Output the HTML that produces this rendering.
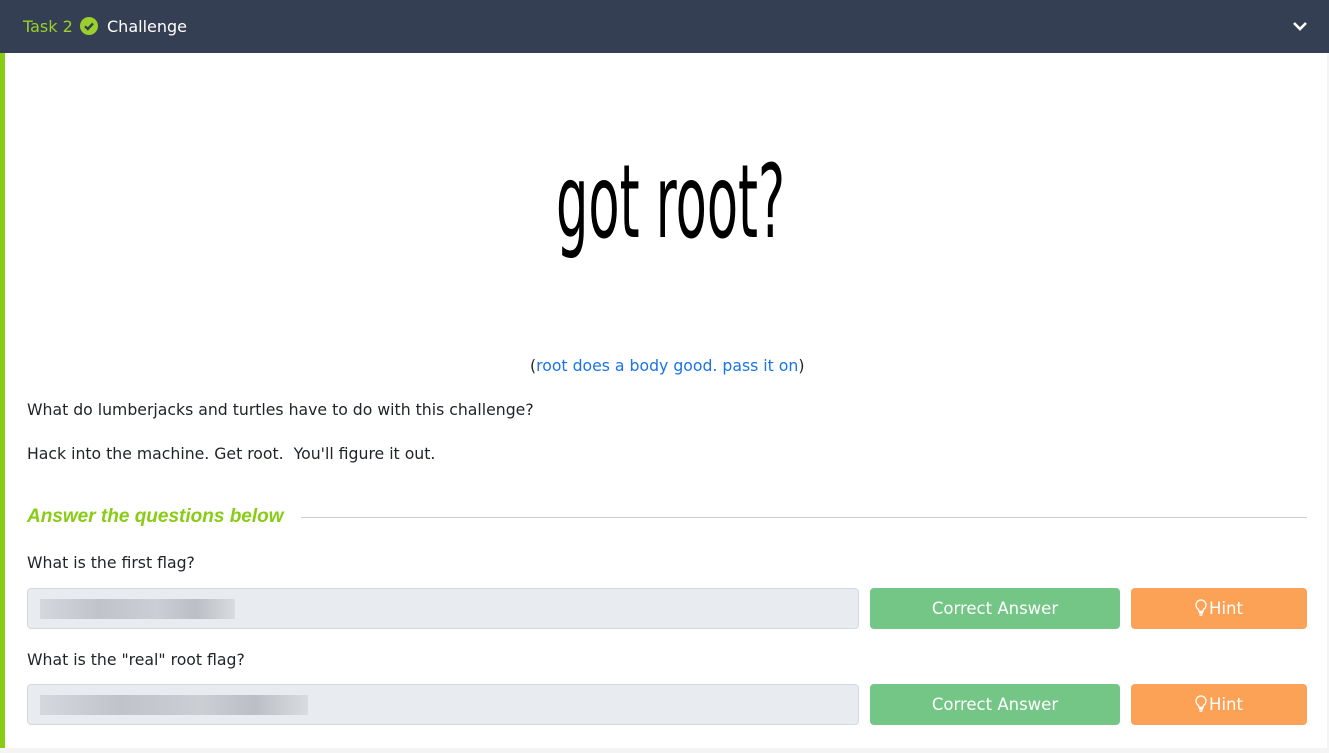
<!DOCTYPE html>
<html><head><meta charset="utf-8"><style>
*{margin:0;padding:0;box-sizing:border-box}
body{width:1329px;height:753px;background:#f4f4f4;font-family:"DejaVu Sans","Liberation Sans",sans-serif;color:#212529;overflow:hidden;position:relative}
.hdr{position:absolute;left:0;top:0;width:1329px;height:53px;background:#353f54;}
.hdr .t{position:absolute;left:23px;top:17px;font-size:16px;color:#9ad02b}
.hdr .c{position:absolute;left:107px;top:17px;font-size:16px;color:#fff}
.card{position:absolute;left:0;top:53px;width:1327px;height:695px;background:#fff;border-left:5px solid #88cc14}
.logo{position:absolute;left:556px;top:152px;font-size:102px;line-height:102px;transform:scaleX(0.50);transform-origin:0 0;color:#000;white-space:nowrap;font-family:"DejaVu Sans","Liberation Sans",sans-serif}
.p{position:absolute;font-size:15.7px;white-space:nowrap}
a{color:#1a73e8;text-decoration:none}
.ans{position:absolute;left:27px;top:506px;font-size:19px;font-style:italic;font-weight:bold;color:#88cc14;font-family:"Liberation Sans",sans-serif}
.line{position:absolute;left:301px;top:517px;width:1006px;height:1px;background:#ccc}
.in{position:absolute;left:27px;width:832px;height:41px;background:#e8ebef;border:1px solid #d5d9de;border-radius:4px}
.blur{position:absolute;left:12px;top:10px;height:20px;background:linear-gradient(90deg,#d0d3d8,#b6bac1 30%,#c4c7cc 60%,#b0b4ba 80%,#d5d8dc);opacity:.8}
.btn{position:absolute;height:41px;border-radius:4px;color:#fff;font-size:16.5px;text-align:center;line-height:41px}
.g{left:870px;width:250px;background:#74c686}
.o{left:1131px;width:176px;background:#fca256}
.btn svg{vertical-align:-3px;margin-right:2px}
</style></head><body>
<div class="hdr"><span class="t">Task 2</span>
<svg style="position:absolute;left:80px;top:17px" width="18" height="18" viewBox="0 0 18 18"><circle cx="9" cy="9" r="9" fill="#9ad02b"/><path d="M5 9.3l2.8 2.7L13 6.5" stroke="#353f54" stroke-width="2.4" fill="none"/></svg>
<span class="c">Challenge</span>
<svg style="position:absolute;left:1292px;top:20px" width="16" height="12" viewBox="0 0 16 12"><path d="M2 3l6 6 6-6" stroke="#fff" stroke-width="2.6" fill="none"/></svg>
</div>
<div class="card"></div>
<div class="logo">got root?</div>
<div class="p" style="left:530px;top:356px">(<a>root does a body good. pass it on</a>)</div>
<div class="p" style="left:27px;top:400px">What do lumberjacks and turtles have to do with this challenge?</div>
<div class="p" style="left:27px;top:444px">Hack into the machine. Get root.&nbsp; You'll figure it out.</div>
<div class="ans">Answer the questions below</div><div class="line"></div>
<div class="p" style="left:27px;top:553px">What is the first flag?</div>
<div class="in" style="top:588px"><div class="blur" style="width:195px"></div></div>
<div class="btn g" style="top:588px">Correct Answer</div>
<div class="btn o" style="top:588px"><svg width="12" height="18" viewBox="0 0 12 18"><path d="M6 1a5 5 0 0 0-3 9c.7.6 1 1.5 1 2.5h4c0-1 .3-1.9 1-2.5A5 5 0 0 0 6 1zM4 14h4M4.5 16h3" stroke="#fff" stroke-width="1.4" fill="none"/></svg>Hint</div>
<div class="p" style="left:27px;top:650px">What is the "real" root flag?</div>
<div class="in" style="top:684px"><div class="blur" style="width:268px"></div></div>
<div class="btn g" style="top:684px">Correct Answer</div>
<div class="btn o" style="top:684px"><svg width="12" height="18" viewBox="0 0 12 18"><path d="M6 1a5 5 0 0 0-3 9c.7.6 1 1.5 1 2.5h4c0-1 .3-1.9 1-2.5A5 5 0 0 0 6 1zM4 14h4M4.5 16h3" stroke="#fff" stroke-width="1.4" fill="none"/></svg>Hint</div>
</body></html>
